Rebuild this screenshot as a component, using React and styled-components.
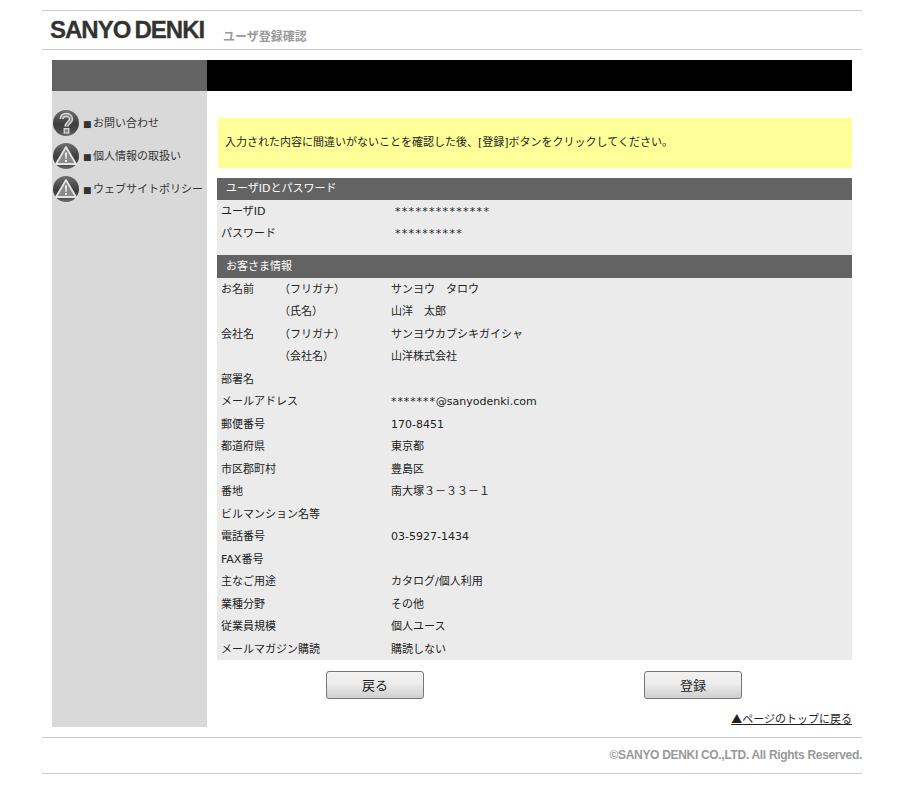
import React from 'react';
import styled, { createGlobalStyle } from 'styled-components';

const GlobalStyle = createGlobalStyle`
  html, body {
    margin: 0;
    padding: 0;
    background: #fff;
    color: #222;
    font-family: "DejaVu Sans", "Noto Sans CJK JP", sans-serif;
    font-size: 11px;
  }
`;

const Page = styled.div`
  width: 820px;
  margin-left: 42px;
  padding-top: 10px;
`;

const Header = styled.header`
  height: 38px;
  border-top: 1px solid #ccc;
  border-bottom: 1px solid #ccc;
  display: flex;
  align-items: flex-start;
`;

const Logo = styled.div`
  margin: 6px 0 0 8px;
  width: 165px;
  font-family: "Liberation Sans", sans-serif;
  font-weight: bold;
  font-size: 24px;
  line-height: 26px;
  letter-spacing: -1px;
  word-spacing: -1.5px;
  -webkit-text-stroke: 0.3px #333;
  color: #333;
  white-space: nowrap;
`;

const PageTitle = styled.h1`
  margin: 16px 0 0 8px;
  font-family: "Noto Sans CJK JP", sans-serif;
  font-size: 12px;
  line-height: 18px;
  font-weight: bold;
  color: #999;
`;

const Frame = styled.div`
  margin: 10px 10px 0;
  display: grid;
  grid-template-columns: 155px 645px;
  grid-template-rows: 31px auto;
`;

const NavCap = styled.div`
  background: #636363;
`;

const BlackBar = styled.div`
  background: #000;
`;

const Sidebar = styled.nav`
  background: #d9d9d9;
  padding-top: 18px;
`;

const NavItem = styled.a`
  display: flex;
  align-items: center;
  height: 27px;
  margin-bottom: 6px;
  padding-left: 1px;
  color: #333;
  white-space: nowrap;
  line-height: 20px;
`;

const NavIcon = styled.svg`
  width: 26px;
  height: 26px;
  margin-right: 4px;
  flex: none;
`;

const NavLabel = styled.span`
  display: flex;
  padding-top: 2px;
`;

const Bullet = styled.span`
  width: 10px;
  font-size: 9px;
  color: #333;
`;

const Main = styled.main`
  height: 636px;
  box-sizing: border-box;
  padding: 27px 0 0 10px;
`;

const Notice = styled.p`
  margin: 0 0 10px 1px;
  height: 50px;
  background: #ffff99;
  padding: 0 7px;
  line-height: 49px;
  color: #222;
`;

const SectionTitle = styled.h2`
  margin: 0;
  height: 22px;
  padding-left: 9px;
  background: #636363;
  color: #fff;
  font-size: 11px;
  font-weight: normal;
  line-height: 22px;
`;

const CustomerTitle = styled(SectionTitle)`
  height: 23px;
  line-height: 24px;
`;

const AccountBody = styled.div`
  background: #ebebeb;
  height: 55px;
`;

const AccountRow = styled.div`
  display: grid;
  grid-template-columns: 174px 1fr;
  height: 22px;
  padding-left: 4px;
  line-height: 24px;
`;

const Masked = styled.span`
  letter-spacing: 1.3px;
`;

const MailStars = styled.span`
  letter-spacing: 0.9px;
`;

const CustomerBody = styled.div`
  background: #ebebeb;
`;

const Row = styled.div`
  display: grid;
  grid-template-columns: 58px 112px 1fr;
  height: 22.47px;
  padding-left: 4px;
  line-height: 24px;
  white-space: nowrap;
`;

const Actions = styled.div`
  display: grid;
  grid-template-columns: 98px 98px;
  justify-content: space-between;
  padding: 11px 110px 0 109px;
`;

const ActionButton = styled.button`
  height: 28px;
  border: 1px solid #777;
  border-radius: 3px;
  background: linear-gradient(#f2f2f2, #ececec 45%, #cfcfcf);
  color: #222;
  font-family: "Noto Sans CJK JP", sans-serif;
  font-size: 13px;
  padding: 0;
`;

const TopLink = styled.a`
  display: block;
  margin-top: 10px;
  text-align: right;
  color: #222;
  text-decoration: underline;
  line-height: 18px;
`;

const Triangle = styled.span`
  font-family: "Noto Sans CJK JP", sans-serif;
`;

const Footer = styled.footer`
  margin-top: 10px;
  height: 35px;
  border-top: 1px solid #ccc;
  border-bottom: 1px solid #ccc;
  text-align: right;
  font-family: "Liberation Sans", sans-serif;
  font-weight: bold;
  font-size: 12px;
  letter-spacing: -0.31px;
  line-height: 35px;
  color: #999;
`;

const IconBase = ({ id, children }) => (
  <NavIcon viewBox="0 0 26 26" aria-hidden="true">
    <defs>
      <linearGradient id={id} x1="0" y1="0" x2="0" y2="1">
        <stop offset="0" stopColor="#6e6e6e" />
        <stop offset="0.55" stopColor="#3c3c3c" />
        <stop offset="0.8" stopColor="#4a4a4a" />
        <stop offset="1" stopColor="#6a6a6a" />
      </linearGradient>
    </defs>
    <circle cx="13" cy="13" r="13" fill={`url(#${id})`} />
    {children}
  </NavIcon>
);

const HelpIcon = ({ id }) => (
  <IconBase id={id}>
    <path
      d="M8.5 9 C8.5 3.8 18 3.6 18 9 C18 12.6 13.5 12.6 13.5 16.5"
      fill="none"
      stroke="#d8d8d8"
      strokeWidth="4.4"
    />
    <path
      d="M8.5 9 C8.5 3.8 18 3.6 18 9 C18 12.6 13.5 12.6 13.5 16.5"
      fill="none"
      stroke="#8a8a8a"
      strokeWidth="1.6"
    />
    <rect x="11.2" y="18.6" width="4.6" height="4.4" fill="#8a8a8a" stroke="#d8d8d8" strokeWidth="1.3" />
  </IconBase>
);

const WarnIcon = ({ id }) => (
  <IconBase id={id}>
    <path d="M13 4 L23 21 L3 21 Z" fill="#8a8a8a" stroke="#e4e4e4" strokeWidth="1.8" strokeLinejoin="round" />
    <path d="M11.9 9.5 h2.2 l-.5 6.5 h-1.2 Z" fill="#eee" />
    <rect x="12" y="17" width="2" height="2" fill="#eee" />
  </IconBase>
);

const customerRows = [
  ['お名前', '（フリガナ）', 'サンヨウ　タロウ'],
  ['', '（氏名）', '山洋　太郎'],
  ['会社名', '（フリガナ）', 'サンヨウカブシキガイシャ'],
  ['', '（会社名）', '山洋株式会社'],
  ['部署名', '', ''],
  ['メールアドレス', '', <><MailStars>*******</MailStars>@sanyodenki.com</>],
  ['郵便番号', '', '170-8451'],
  ['都道府県', '', '東京都'],
  ['市区郡町村', '', '豊島区'],
  ['番地', '', '南大塚３－３３－１'],
  ['ビルマンション名等', '', ''],
  ['電話番号', '', '03-5927-1434'],
  ['FAX番号', '', ''],
  ['主なご用途', '', 'カタログ/個人利用'],
  ['業種分野', '', 'その他'],
  ['従業員規模', '', '個人ユース'],
  ['メールマガジン購読', '', '購読しない'],
];

export default function App() {
  return (
    <Page>
      <GlobalStyle />
      <Header>
        <Logo>SANYO DENKI</Logo>
        <PageTitle>ユーザ登録確認</PageTitle>
      </Header>
      <Frame>
        <NavCap />
        <BlackBar />
        <Sidebar>
          <NavItem><HelpIcon id="nav-help" /><NavLabel><Bullet>■</Bullet>お問い合わせ</NavLabel></NavItem>
          <NavItem><WarnIcon id="nav-privacy" /><NavLabel><Bullet>■</Bullet>個人情報の取扱い</NavLabel></NavItem>
          <NavItem><WarnIcon id="nav-policy" /><NavLabel><Bullet>■</Bullet>ウェブサイトポリシー</NavLabel></NavItem>
        </Sidebar>
        <Main>
          <Notice>入力された内容に間違いがないことを確認した後、[登録]ボタンをクリックしてください。</Notice>
          <SectionTitle>ユーザIDとパスワード</SectionTitle>
          <AccountBody>
            <AccountRow><span>ユーザID</span><Masked>**************</Masked></AccountRow>
            <AccountRow><span>パスワード</span><Masked>**********</Masked></AccountRow>
          </AccountBody>
          <CustomerTitle>お客さま情報</CustomerTitle>
          <CustomerBody>
            {customerRows.map(([label, sub, value], key) => (
              <Row key={key}>
                <span>{label}</span>
                <span>{sub}</span>
                <span>{value}</span>
              </Row>
            ))}
          </CustomerBody>
          <Actions>
            <ActionButton type="button">戻る</ActionButton>
            <ActionButton type="button">登録</ActionButton>
          </Actions>
          <TopLink><Triangle>▲</Triangle>ページのトップに戻る</TopLink>
        </Main>
      </Frame>
      <Footer>©SANYO DENKI CO.,LTD. All Rights Reserved.</Footer>
    </Page>
  );
}
